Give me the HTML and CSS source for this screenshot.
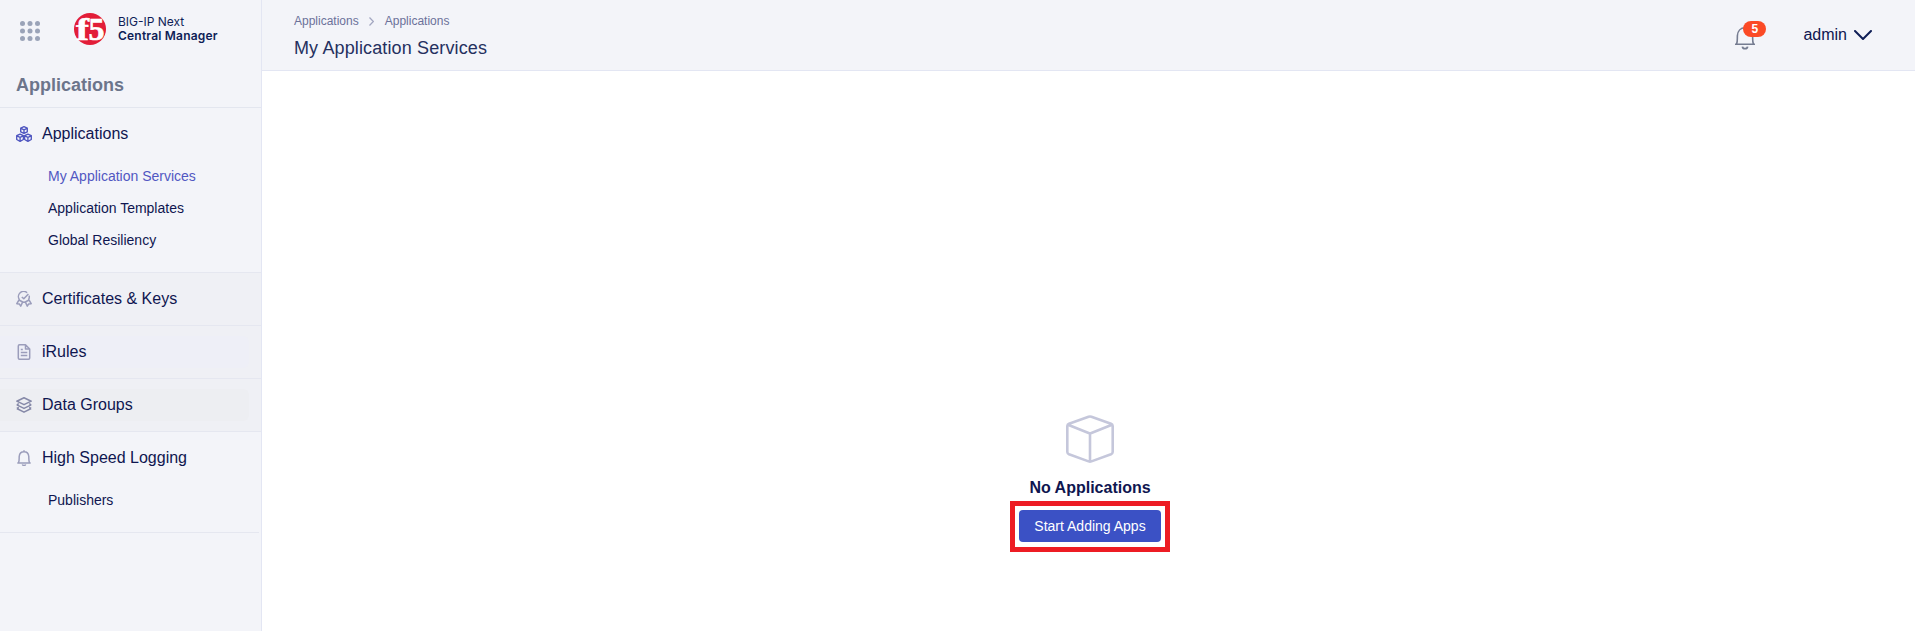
FILE: index.html
```html
<!DOCTYPE html>
<html lang="en">
<head>
<meta charset="utf-8">
<title>Central Manager</title>
<link rel="stylesheet" href="styles.css">
</head>
<body>
<div class="app">
  <aside class="sidebar">
    <div class="brand">
      <svg class="grid-icon" width="20" height="20" viewBox="0 0 20 20" fill="#9aa3b8">
        <circle cx="2.5" cy="2.5" r="2.5"/><circle cx="10" cy="2.5" r="2.5"/><circle cx="17.5" cy="2.5" r="2.5"/>
        <circle cx="2.5" cy="10" r="2.5"/><circle cx="10" cy="10" r="2.5"/><circle cx="17.5" cy="10" r="2.5"/>
        <circle cx="2.5" cy="17.5" r="2.5"/><circle cx="10" cy="17.5" r="2.5"/><circle cx="17.5" cy="17.5" r="2.5"/>
      </svg>
      <svg class="logo" width="32" height="32" viewBox="0 0 32 32">
        <circle cx="16" cy="16" r="16" fill="#e21d38"/>
        <text class="logo-text" x="2" y="27" textLength="13" lengthAdjust="spacingAndGlyphs">f</text>
        <text class="logo-text" x="14.5" y="27" textLength="16" lengthAdjust="spacingAndGlyphs">5</text>
      </svg>
      <div class="brand-name"><span>BIG-IP Next</span><strong>Central Manager</strong></div>
    </div>
    <h2 class="side-title">Applications</h2>
    <nav>
      <section class="group">
        <div class="group-head">
          <svg class="icon icon-active" viewBox="0 0 16 16">
            <path d="M8 .7 11.3 2.2V5.8L8 7.4 4.7 5.8V2.2ZM5 2.4 8 3.8l3-1.4M8 3.8v3.4M4.1 8.2l3.3 1.5v3.8l-3.3 1.8L.7 13.5V9.7ZM.9 9.9l3.2 1.4 3.1-1.4M4.1 11.3v3.5M11.9 8.2l3.4 1.5v3.8l-3.4 1.8-3.3-1.8V9.7ZM8.8 9.9l3.1 1.4 3.2-1.4M11.9 11.3v3.5"/>
          </svg>Applications
        </div>
        <ul class="sub">
          <li class="current">My Application Services</li>
          <li>Application Templates</li>
          <li>Global Resiliency</li>
        </ul>
      </section>
      <section class="group shaded">
        <div class="group-head">
          <svg class="icon" viewBox="0 0 16 16">
            <path d="M11.1 1.7A5.2 5.2 0 0 0 3.4 8.6M13.1 4.6A5.2 5.2 0 0 1 12.6 8.6M6 10.8a5.2 5.2 0 0 0 4 0M5.8 6l2 1.8 4.6-4.7M3 9 .8 12.7l2.5.2 1.4 2.3 2-4.3M13 9l2.2 3.7-2.5.2-1.4 2.3-2-4.3M3 9l3.7 2M13 9l-3.7 2"/>
          </svg>Certificates &amp; Keys
        </div>
      </section>
      <section class="group shaded">
        <div class="group-head hover-lilac">
          <svg class="icon" viewBox="0 0 16 16">
            <path d="M9.5.8h-6A1.2 1.2 0 0 0 2.3 2v12a1.2 1.2 0 0 0 1.2 1.2h9a1.2 1.2 0 0 0 1.2-1.2V5ZM9.5.8V5h4.2M4.8 5.6h2M4.8 8.6h6.5M4.8 11.6h6.5"/>
          </svg>iRules
        </div>
      </section>
      <section class="group shaded">
        <div class="group-head hover-gray">
          <svg class="icon icon-dark" viewBox="0 0 16 16">
            <path d="M8 .8 15.2 4.2 8 7.7.8 4.2ZM.8 7.8 8 11.4l7.2-3.6M.8 11.5 8 15.2l7.2-3.7M2.8 6.6.8 7.8M13.2 6.6l2 1.2M2.8 10.3.8 11.5M13.2 10.3l2 1.2"/>
          </svg>Data Groups
        </div>
      </section>
      <section class="group last">
        <div class="group-head">
          <svg class="icon" viewBox="0 0 16 16">
            <path d="M8 .3v1.2M1.3 13h13.4M2.5 12.8C3.4 10.5 3.1 8.8 3.2 6.5 3.5 3.4 5.2 1.7 8 1.7s4.5 1.7 4.8 4.8c.1 2.3-.2 4 .7 6.3M6.4 14.3c.3 1.5 2.9 1.5 3.2 0"/>
          </svg>High Speed Logging
        </div>
        <ul class="sub"><li>Publishers</li></ul>
      </section>
    </nav>
  </aside>
  <div class="page">
    <header class="topbar">
      <div class="heading">
        <div class="crumbs"><span>Applications</span>
          <svg width="5" height="9" viewBox="0 0 5 9"><path d="M.5.5 4.4 4.5 .5 8.5" fill="none" stroke="#a3a7c1" stroke-width="1.3"/></svg>
          <span>Applications</span></div>
        <h1>My Application Services</h1>
      </div>
      <div class="actions">
        <div class="notify">
          <svg width="20" height="24" viewBox="0 0 20 24" fill="none" stroke="#757c91" stroke-width="1.6">
            <path d="M0 18.2H20M1.6 18C2.7 15.6 2.2 12.6 2.4 9.6 2.7 5 5.6 1.7 10 1.7s7.3 3.3 7.6 7.9c.2 3-.3 6 .8 8.4M10 0v1.7"/>
            <path d="M7.4 20.6c.5 2.8 4.7 2.8 5.2 0" stroke-width="1.8"/>
          </svg>
          <span class="badge">5</span>
        </div>
        <div class="user">admin
          <svg width="18" height="10" viewBox="0 0 18 10"><path d="M1 1 9 9 17 1" fill="none" stroke="#0f1e57" stroke-width="2" stroke-linecap="round" stroke-linejoin="round"/></svg>
        </div>
      </div>
    </header>
    <main class="empty">
      <svg width="48" height="48" viewBox="0 0 48 48" fill="none" stroke="#c5c7db" stroke-width="2.6" stroke-linejoin="round">
        <path d="M22.6 1.7Q24 1.2 25.4 1.7L45 8.8Q46.6 9.5 46.7 11V37Q46.6 38.6 45 39.3L25.4 46.4Q24 46.9 22.6 46.4L3 39.3Q1.4 38.6 1.3 37V11Q1.4 9.5 3 8.8ZM2 9.8 22.6 18Q24 18.6 25.4 18L46 9.8M24 18.5V46.5"/>
      </svg>
      <p class="empty-title">No Applications</p>
      <div class="highlight"><button class="primary">Start Adding Apps</button></div>
    </main>
  </div>
</div>
</body>
</html>
```
FILE: styles.css
```css
* { box-sizing: border-box; }
body { margin: 0; font-family: "Liberation Sans", Arial, sans-serif; color: #0f1650; background: #fff; }
.app { display: flex; height: 631px; overflow: hidden; }
.sidebar { width: 262px; flex: none; background: #f3f4f9; border-right: 1px solid #e3e6f3; }
.brand { display: flex; height: 62px; padding: 13px 0 0 20px; }
.grid-icon { margin-top: 8px; }
.logo { margin-left: 34px; overflow: visible; }
.logo-text { font-family: "Liberation Serif", serif; font-weight: bold; font-size: 32px; fill: #fff; stroke: #fff; stroke-width: .6; }
.brand-name { display: flex; flex-direction: column; margin: 2px 0 0 12px; font-family: Inter, sans-serif; font-size: 12px; line-height: 14px; white-space: nowrap; letter-spacing: 0; color: #0f1e57; }
.brand-name strong { font-weight: 600; letter-spacing: .2px; }
.side-title { margin: 0; height: 46px; padding-left: 16px; line-height: 46px; font-size: 18px; color: #6c758b; border-bottom: 1px solid #e3e6ef; }
.group { border-bottom: 1px solid #e5e7f0; }
.shaded { background: #eff0f5; padding: 10px 0; }
.group-head { display: flex; align-items: center; gap: 10px; height: 52px; padding-left: 16px; font-size: 16px; }
.shaded .group-head { height: 32px; margin-right: 12px; border-radius: 0 6px 6px 0; }
.hover-lilac { background: #eeeff7; }
.hover-gray { background: #edeef2; }
.last { margin-right: 2px; }
.icon { width: 16px; height: 16px; fill: none; stroke: #9b9dbb; stroke-width: 1.5; stroke-linejoin: round; }
.icon-dark { stroke: #8689a8; }
.icon-active { stroke: #4f56c0; stroke-width: 1.35; }
.sub { margin: 0; padding: 0 0 16px 48px; list-style: none; font-size: 14px; line-height: 32px; }
.current { color: #5157c2; }
.page { flex: 1; display: flex; flex-direction: column; }
.topbar { display: flex; justify-content: space-between; height: 71px; padding: 13px 43px 0 32px; background: #f3f4f9; border-bottom: 1px solid #e3e6f3; }
.crumbs { display: flex; align-items: center; gap: 10.5px; font-size: 12px; line-height: 16px; color: #6b7199; }
h1 { margin: 8px 0 0; font-size: 18px; line-height: 22px; font-weight: 400; letter-spacing: .13px; color: #25305f; }
.actions { display: flex; }
.notify { position: relative; margin: 13px 48px 0 0; height: 24px; }
.badge { position: absolute; left: 8px; top: -5px; width: 23px; height: 16px; border-radius: 8px; background: #fb4a26; color: #fff; font-size: 12px; font-weight: bold; line-height: 16px; text-align: center; }
.user { display: flex; align-items: center; gap: 7px; height: 44px; font-size: 16px; }
.empty { flex: 1; display: flex; flex-direction: column; align-items: center; padding: 344px 0 0 3px; }
.empty-title { margin: 15px 0 3px; font-size: 16px; line-height: 20px; font-weight: bold; }
.highlight { border: 5px solid #ed1c24; padding: 4px; height: 51px; }
.primary { width: 142px; height: 32px; padding: 0; border: 0; border-radius: 4px; background: #3b51c5; color: #fff; font: 14px "Liberation Sans", Arial, sans-serif; }
```
